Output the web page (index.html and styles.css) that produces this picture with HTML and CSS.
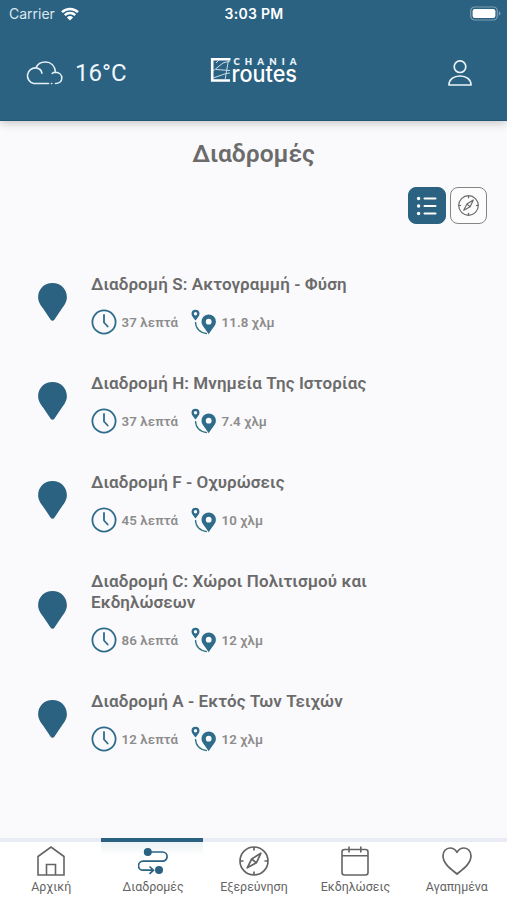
FILE: index.html
```html
<!DOCTYPE html>
<html lang="el">
<head>
<meta charset="utf-8">
<title>Chania routes</title>
<link rel="stylesheet" href="styles.css">
</head>
<body>
<svg class="defs" width="0" height="0">
  <symbol id="drop" viewBox="0 0 28 37"><path d="M14 0C6 0 0 6 0 13.800c0 4.500 2.600 8 5 11.200l7.200 10.700c.9 1.300 2.700 1.300 3.600 0L23 25c2.400-3.200 5-6.700 5-11.200C28 6 22 0 14 0z" fill="#2b6181"/></symbol>
  <symbol id="clock" viewBox="0 0 26 26"><circle cx="13" cy="13" r="11.600" fill="none" stroke="#2f6c8c" stroke-width="1.800"/><path d="M13 6v7.500l3.700 4" fill="none" stroke="#2f6c8c" stroke-width="1.800" stroke-linecap="round" stroke-linejoin="round"/></symbol>
  <symbol id="dist" viewBox="0 0 26 26"><path fill="#2f6c8c" fill-rule="evenodd" d="M4.500.8a4 4 0 0 0-4 4c0 2.200 2.200 4.200 4 6.700 1.800-2.500 4-4.500 4-6.700a4 4 0 0 0-4-4zm0 2.300a1.700 1.700 0 1 1 0 3.400 1.700 1.700 0 0 1 0-3.400zM17.700 5.500a7.200 7.200 0 0 0-7.200 7.200c0 4 4.200 7.300 7.200 12.500 3-5.200 7.200-8.500 7.200-12.500a7.200 7.200 0 0 0-7.200-7.200zm0 4.300a2.900 2.900 0 1 1 0 5.800 2.900 2.900 0 0 1 0-5.800z"/><path d="M4.500 13c.1 6.500 4.500 11 11.500 11.600" fill="none" stroke="#2f7480" stroke-width="1.300"/></symbol>
  <symbol id="compass" viewBox="0 0 30 30"><g fill="none" stroke="currentColor" stroke-width="1.700" stroke-linejoin="round"><circle cx="15" cy="15" r="14"/><path d="M15 1v3.500M15 25.500V29M1 15h3.500M25.500 15H29M21.800 7.300L12.700 13 8.200 21.800l9.200-5zM12.700 13l4.700 3.800"/></g></symbol>
</svg>
<header class="top">
  <div class="status">
    <div class="carrier"><span>Carrier</span>
      <svg width="18" height="14" viewBox="0 0 18 14"><g fill="none" stroke="#fff" stroke-width="2.500"><path d="M1 5.200a11.300 11.300 0 0 1 16 0M3.800 8.200a7.400 7.400 0 0 1 10.400 0"/></g><path d="M5.900 10.400a4.400 4.400 0 0 1 6.200 0L9 13.600z" fill="#fff"/></svg>
    </div>
    <div class="time">3:03 PM</div>
    <svg class="battery" width="31" height="16" viewBox="0 0 31 16"><rect x=".7" y="1" width="26.600" height="13" rx="4" fill="none" stroke="#7fa0b4" stroke-width="1.200"/><rect x="2.600" y="2.900" width="22.800" height="9.200" rx="2.300" fill="#fff"/><path d="M28.800 5.300c2.200.7 2.200 3.700 0 4.400z" fill="#7fa0b4"/></svg>
  </div>
  <div class="brandbar">
    <div class="weather">
      <svg width="38" height="24" viewBox="0 0 38 24" fill="none" stroke="#e3f0f7" stroke-width="1.600" stroke-linecap="round"><path d="M23.500 22.500H8.700A7.900 7.900 0 0 1 11 6.900C12.300 3.500 16 1 20.500 1c5.500 0 9.500 3.800 10 10.300 3.700.2 6.300 2.500 6.300 5.600 0 3.300-2.600 5.600-6.300 5.600M11 6.900c3.100.4 5.400 2.400 5.900 5.200M30.500 11.300c-1.300 0-2.300.3-3.300 1M26.500 22.500h.3"/></svg>
      <span>16°C</span>
    </div>
    <svg class="logo" width="88" height="28" viewBox="0 0 88 28">
      <path d="M20.500 2.200H2.200v21.300H20" fill="none" stroke="#fff" stroke-width="2.600"/>
      <path d="M3 14L13 6l7-2M6 12.500l14 1M18.500 3L15 23M3 21l13-4.500 4-.5M9 3l-3 3" fill="none" stroke="#c9dde8" stroke-width="1"/>
      <text class="logo-small" x="23.500" y="8.300" textLength="63" lengthAdjust="spacing">CHANIA</text>
      <text class="logo-big" x="21.500" y="24.800" textLength="65.500" lengthAdjust="spacingAndGlyphs">routes</text>
    </svg>
    <svg class="user" width="24" height="26" viewBox="0 0 24 26" fill="none" stroke="#e9f4fa" stroke-width="1.700" stroke-linejoin="round"><circle cx="12" cy="6.700" r="5.800"/><path d="M1 25c0-5.500 4.500-9 11-9s11 3.500 11 9z"/></svg>
  </div>
</header>
<main>
  <h1>Διαδρομές</h1>
  <div class="modes">
    <button class="mode on"><svg width="22" height="20" viewBox="0 0 22 20"><g stroke="#fff" stroke-width="2" stroke-linecap="round"><path d="M8.500 2.500h11M8.500 10h11M8.500 17.500h11"/></g><g fill="#fff"><circle cx="2.600" cy="2.500" r="1.700"/><circle cx="2.600" cy="10" r="1.700"/><circle cx="2.600" cy="17.500" r="1.700"/></g></svg></button>
    <button class="mode"><svg width="21" height="21"><use href="#compass"/></svg></button>
  </div>
  <ul class="routes">
    <li><svg class="pin"><use href="#drop"/></svg><div><h2>Διαδρομή S: Ακτογραμμή - Φύση</h2><p><svg><use href="#clock"/></svg><span class="dur">37 λεπτά</span><svg><use href="#dist"/></svg><span>11.8 χλμ</span></p></div></li>
    <li><svg class="pin"><use href="#drop"/></svg><div><h2>Διαδρομή H: Μνημεία Της Ιστορίας</h2><p><svg><use href="#clock"/></svg><span class="dur">37 λεπτά</span><svg><use href="#dist"/></svg><span>7.4 χλμ</span></p></div></li>
    <li><svg class="pin"><use href="#drop"/></svg><div><h2>Διαδρομή F - Οχυρώσεις</h2><p><svg><use href="#clock"/></svg><span class="dur">45 λεπτά</span><svg><use href="#dist"/></svg><span>10 χλμ</span></p></div></li>
    <li><svg class="pin"><use href="#drop"/></svg><div><h2>Διαδρομή C: Χώροι Πολιτισμού και Εκδηλώσεων</h2><p><svg><use href="#clock"/></svg><span class="dur">86 λεπτά</span><svg><use href="#dist"/></svg><span>12 χλμ</span></p></div></li>
    <li><svg class="pin"><use href="#drop"/></svg><div><h2>Διαδρομή A - Εκτός Των Τειχών</h2><p><svg><use href="#clock"/></svg><span class="dur">12 λεπτά</span><svg><use href="#dist"/></svg><span>12 χλμ</span></p></div></li>
  </ul>
</main>
<nav class="tabs">
  <a><svg width="30" height="30" viewBox="0 0 30 30" fill="none" stroke="currentColor" stroke-width="1.600"><path d="M2 29V10.500L15 1l13 9.500V29zM10.500 29V18.500h9V29"/></svg><span>Αρχική</span></a>
  <a class="active"><svg width="30" height="30" viewBox="0 0 30 30"><g fill="none" stroke="#2b6181" stroke-width="1.700"><path d="M11 6h13.500a4.600 4.600 0 0 1 0 9.200H5a4.500 4.500 0 0 0 0 9h9M11.500 20.500l4 3.700-4 3.700"/></g><circle cx="9.800" cy="6" r="4" fill="#2b6181"/><circle cx="21" cy="24.100" r="4" fill="#2b6181"/></svg><span>Διαδρομές</span></a>
  <a><svg width="30" height="30"><use href="#compass"/></svg><span>Εξερεύνηση</span></a>
  <a><svg width="30" height="30" viewBox="0 0 30 30" fill="none" stroke="currentColor" stroke-width="1.600"><rect x="2" y="3.500" width="26" height="25.500" rx="2.500"/><path d="M2 9.800h26M9 .5v6M20.800.5v6"/></svg><span>Εκδηλώσεις</span></a>
  <a><svg width="30" height="30" viewBox="0 0 30 30" fill="none" stroke="currentColor" stroke-width="1.700" stroke-linejoin="round"><path d="M15 28C9.500 23.500 1 18 1 9.700 1 5.500 4 2 8 2c3 0 5.500 1.500 7 4.300C16.500 3.500 19 2 22 2c4 0 7 3.500 7 7.700C29 18 20.500 23.500 15 28z"/></svg><span>Αγαπημένα</span></a>
</nav>
</body>
</html>
```
FILE: styles.css
```css
* { box-sizing: border-box; margin: 0; padding: 0; }
body {
  width: 507px; height: 900px; overflow: hidden;
  display: flex; flex-direction: column;
  background: #fafafc; color: #6b6b6b;
  font-family: Roboto, "Liberation Sans", sans-serif;
}
svg { display: block; flex: none; }
.defs { position: absolute; }
.top { height: 121px; flex: none; background: #2b6181; border-bottom: 1px solid #245674; box-shadow: 0 2px 9px rgba(0,0,0,.22); color: #fff; }
.status { height: 28px; display: grid; grid-template-columns: 1fr auto 1fr; align-items: center; padding: 0 8px 1px 9px; font-family: Inter, sans-serif; font-size: 14px; }
.carrier { display: flex; align-items: center; gap: 6px; color: #dce8ef; }
.time { font-weight: 600; font-size: 14px; letter-spacing: .3px; }
.battery { justify-self: end; margin-right: -2px; }
.brandbar { height: 92px; display: grid; grid-template-columns: 1fr auto 1fr; align-items: center; padding: 0 35px 2px 25px; }
.weather { display: flex; align-items: center; gap: 12px; font-size: 24px; color: #eef7fc; }
.logo { margin-left: 10px; margin-top: -4px; overflow: visible; }
.logo-small { font: 800 9.5px Lato, sans-serif; fill: #e8f3f9; }
.logo-big { font: 500 22.5px Inter, sans-serif; fill: #fff; }
.user { justify-self: end; }
main { flex: 1; display: flex; flex-direction: column; }
h1 { margin-top: 17px; line-height: 32px; font-size: 24.6px; font-weight: 600; text-align: center; }
.modes { margin-top: 17px; padding-right: 20px; display: flex; justify-content: flex-end; gap: 4px; }
.mode { width: 37.5px; height: 37px; display: grid; place-items: center; border: 1.5px solid #858585; border-radius: 8px; background: #fcfcfd; color: #6b6b6b; }
.mode.on { background: #2b6181; border-color: #2b6181; }
.routes { margin-top: 50px; padding-left: 38px; list-style: none; display: grid; gap: 38px; }
.routes li { display: flex; align-items: center; gap: 24px; }
.routes li > div { width: 295px; }
.pin { width: 29px; height: 38px; margin-top: -5px; }
h2 { font-size: 17px; letter-spacing: .09px; line-height: 21px; font-weight: 600; }
p { height: 26px; margin-top: 14px; display: flex; align-items: center; font-size: 13.3px; letter-spacing: .1px; font-weight: 600; color: #8c8c8c; }
p svg { width: 26px; height: 26px; margin-left: -.5px; }
p span { margin-left: 5px; padding-top: 1px; }
.dur { width: 69.5px; white-space: nowrap; }
.tabs { height: 62px; flex: none; display: grid; grid-template-columns: repeat(5, 1fr); border-top: 4px solid #e9ecf4; background: #fff; }
.tabs a { display: flex; flex-direction: column; align-items: center; padding-top: 4px; padding-left: 1px; font-size: 12.400px; color: #646464; line-height: 18px; }
.tabs span { margin-top: 2px; }
.tabs .active { margin-top: -4px; padding-left: 2px; border-top: 4px solid #2b6181; background: linear-gradient(#edf3f5, #fff 14px); }
```
